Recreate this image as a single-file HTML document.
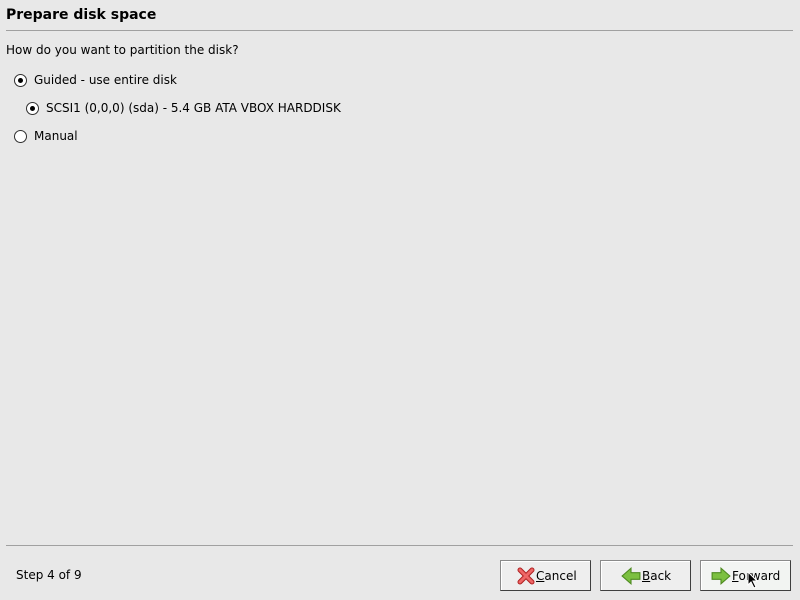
<!DOCTYPE html>
<html><head><meta charset="utf-8"><style>
html,body{margin:0;padding:0;width:800px;height:600px;overflow:hidden;background:#e8e8e8;font-family:"DejaVu Sans","Liberation Sans",sans-serif;font-size:12px;color:#000;position:relative}
.abs{position:absolute;white-space:nowrap}
.title{left:6px;top:7px;font-weight:bold;font-size:14px}
.sep{position:absolute;left:6px;width:787px;height:1px;background:#a0a0a0}
.radio{position:absolute;width:11px;height:11px;border:1px solid #303030;border-radius:50%;background:#fff}
.radio.on::after{content:"";position:absolute;left:3px;top:3px;width:5px;height:5px;border-radius:50%;background:#000}
.btn{position:absolute;top:560px;width:91px;height:31px;border:1px solid #8a8a8a;border-right-color:#404040;border-bottom-color:#404040;background:#eeeeee;box-sizing:border-box;box-shadow:inset 1px 1px 0 #fff}
.btn span{position:absolute;top:8px}
.btn svg{position:absolute;top:6px}
u{text-decoration:underline}
</style></head><body>
<div class="abs title">Prepare disk space</div>
<div class="sep" style="top:30px"></div>
<div class="abs" style="left:6px;top:43px">How do you want to partition the disk?</div>
<div class="radio on" style="left:14px;top:74px"></div>
<div class="abs" style="left:34px;top:73px">Guided - use entire disk</div>
<div class="radio on" style="left:26px;top:102px"></div>
<div class="abs" style="left:46px;top:101px">SCSI1 (0,0,0) (sda) - 5.4 GB ATA VBOX HARDDISK</div>
<div class="radio" style="left:14px;top:130px"></div>
<div class="abs" style="left:34px;top:129px">Manual</div>
<div class="sep" style="top:545px"></div>
<div class="abs" style="left:16px;top:568px">Step 4 of 9</div>
<div class="btn" style="left:500px"><svg width="18" height="18" viewBox="0 0 18 18" style="left:16px"><path d="M3 3 L15 15 M15 3 L3 15" stroke="#b02020" stroke-width="5" stroke-linecap="round"/><path d="M3 3 L15 15 M15 3 L3 15" stroke="#ee6666" stroke-width="3" stroke-linecap="round"/></svg><span style="left:35px"><u>C</u>ancel</span></div>
<div class="btn" style="left:600px"><svg width="20" height="18" viewBox="0 0 18 16" style="left:20px;top:6px"><path d="M1 8 L9 1 L9 5 L17 5 L17 11 L9 11 L9 15 Z" fill="#7cc040" stroke="#4e8a20"/></svg><span style="left:41px"><u>B</u>ack</span></div>
<div class="btn" style="left:700px;background:#f2f4f2"><svg width="20" height="18" viewBox="0 0 18 16" style="left:10px;top:6px"><path d="M17 8 L9 1 L9 5 L1 5 L1 11 L9 11 L9 15 Z" fill="#7cc040" stroke="#4e8a20"/></svg><span style="left:31px"><u>F</u>orward</span></div>
<svg class="abs" style="left:747px;top:571px" width="12" height="18" viewBox="0 0 12 18"><path d="M1 1 L1 14 L4 11 L7 17 L9 16 L6 10 L10 10 Z" fill="#000" stroke="#fff" stroke-width="1"/></svg>
</body></html>
